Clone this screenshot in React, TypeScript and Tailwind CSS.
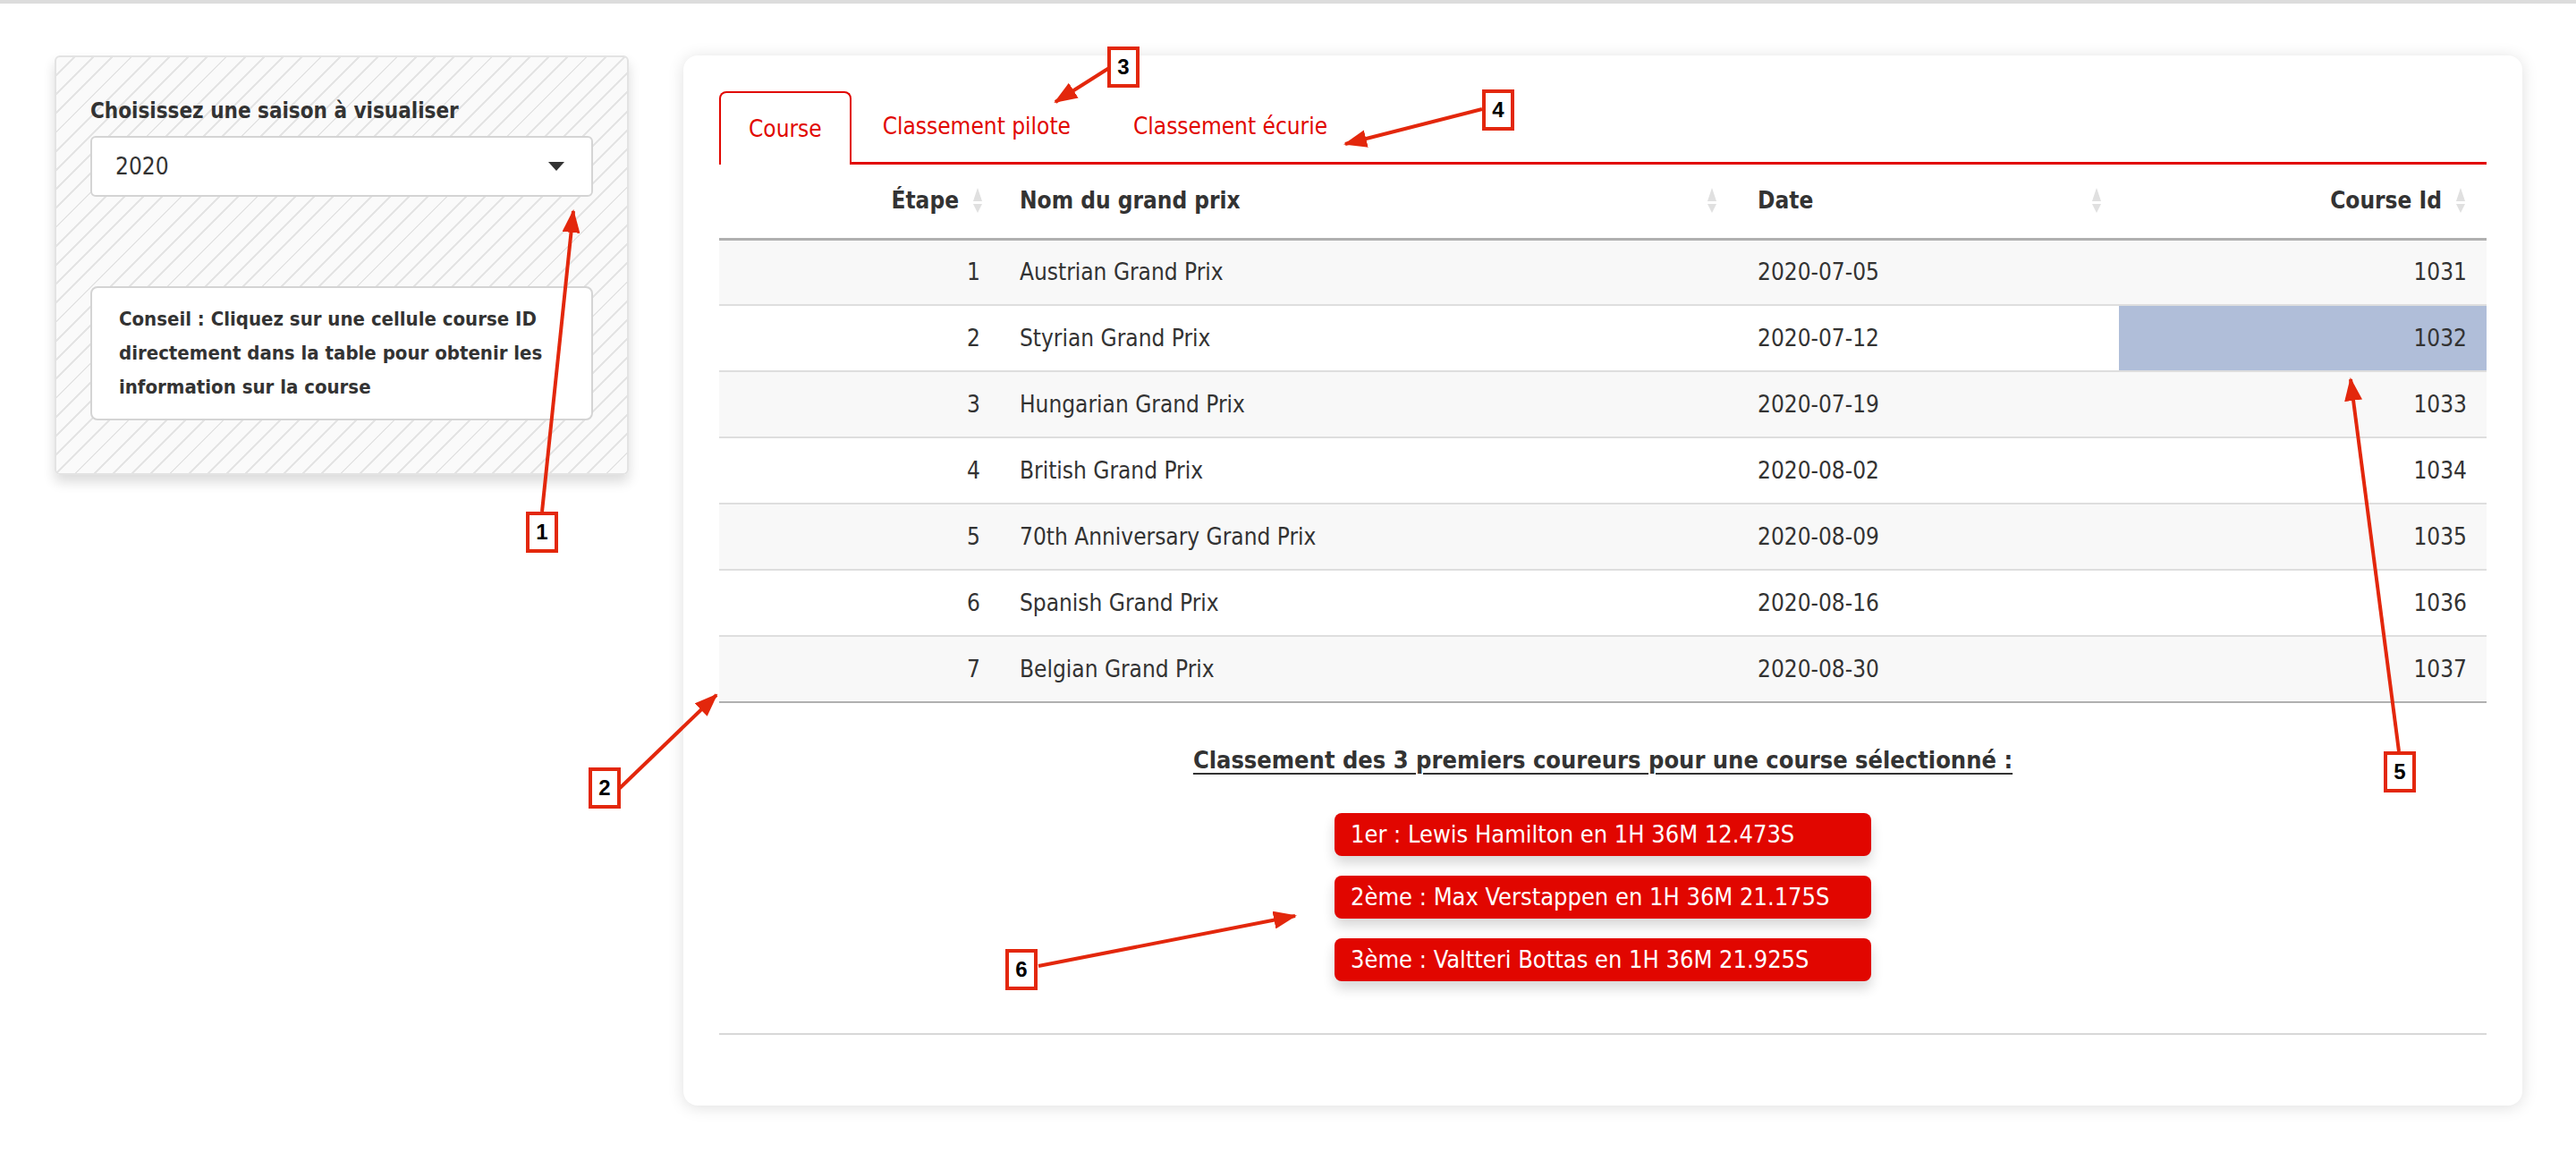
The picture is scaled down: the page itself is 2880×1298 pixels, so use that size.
import React from "react";

const FONT = "font-['Liberation_Sans_Narrow','DejaVu_Sans_Condensed',Roboto,sans-serif]";

const RACES = [
  { step: 1, name: "Austrian Grand Prix", date: "2020-07-05", id: 1031 },
  { step: 2, name: "Styrian Grand Prix", date: "2020-07-12", id: 1032 },
  { step: 3, name: "Hungarian Grand Prix", date: "2020-07-19", id: 1033 },
  { step: 4, name: "British Grand Prix", date: "2020-08-02", id: 1034 },
  { step: 5, name: "70th Anniversary Grand Prix", date: "2020-08-09", id: 1035 },
  { step: 6, name: "Spanish Grand Prix", date: "2020-08-16", id: 1036 },
  { step: 7, name: "Belgian Grand Prix", date: "2020-08-30", id: 1037 },
];

const PODIUM = [
  "1er : Lewis Hamilton en 1H 36M 12.473S",
  "2ème : Max Verstappen en 1H 36M 21.175S",
  "3ème : Valtteri Bottas en 1H 36M 21.925S",
];

// annotation boxes: [label, left, top]
const MARKS: [string, number, number][] = [
  ["1", 588, 568],
  ["2", 658, 854],
  ["3", 1238, 48],
  ["4", 1657, 96],
  ["5", 2665, 836],
  ["6", 1124, 1057],
];

// arrows: [x1, y1, x2, y2]
const ARROWS: [number, number, number, number][] = [
  [606, 568, 641, 232],
  [692, 878, 801, 773],
  [1240, 72, 1180, 110],
  [1657, 118, 1504, 157],
  [2682, 836, 2628, 420],
  [1161, 1076, 1448, 1020],
];

function SortIcon() {
  return (
    <svg width="14" height="32" viewBox="0 0 14 32" className="shrink-0">
      <path d="M7 1 L12 16 L2 16 Z" fill="#e0e0e0" />
      <path d="M2 19 L12 19 L7 29 Z" fill="#e0e0e0" />
    </svg>
  );
}

function Sidebar() {
  return (
    <div className="w-[642px] shrink-0 self-start rounded-md border-2 border-[#e3e3e3] bg-[repeating-linear-gradient(135deg,#fafafa_0px,#fafafa_13px,#e4e4e4_13px,#e4e4e4_15px)] px-[38px] pt-[40px] pb-[59px] shadow-[0_8px_14px_rgba(0,0,0,0.14)]">
      <label className="block text-[24px] font-bold text-[#333] leading-[40px]">
        Choisissez une saison à visualiser
      </label>
      <div className="mt-[8px] flex h-[68px] items-center justify-between rounded-md border-2 border-[#d4d4d4] bg-white pl-[26px] pr-[30px]">
        <span className="text-[26px] text-[#333]">2020</span>
        <svg width="18" height="10" viewBox="0 0 18 10">
          <path d="M0 0 H18 L9 10 Z" fill="#333" />
        </svg>
      </div>
      <div className="mt-[100px] rounded-lg border-2 border-[#d4d4d4] bg-white px-[30px] py-[16px]">
        <p className="text-[22px] font-bold leading-[38px] text-[#333]">
          Conseil : Cliquez sur une cellule course ID directement dans la table pour obtenir les information sur la course
        </p>
      </div>
    </div>
  );
}

function Tabs() {
  return (
    <div className="flex items-end border-b-[3px] border-[#e10600] text-[26px] text-[#e10600]">
      <div className="-mb-[3px] flex h-[82px] items-center rounded-t-lg border-2 border-b-0 border-[#e10600] bg-white px-[31px]">
        Course
      </div>
      <div className="flex h-[80px] items-center px-[35px]">Classement pilote</div>
      <div className="flex h-[80px] items-center px-[35px]">Classement écurie</div>
    </div>
  );
}

function RaceTable() {
  return (
    <table className="w-full table-fixed border-collapse text-[26px] text-[#333]">
      <colgroup>
        <col className="w-[310px]" />
        <col className="w-[825px]" />
        <col className="w-[430px]" />
        <col />
      </colgroup>
      <thead>
        <tr className="h-[83px] border-b-[3px] border-[#b0b0b0]">
          <th className="pr-[14px] font-bold">
            <div className="flex items-center justify-end gap-[14px]">
              <span>Étape</span>
              <SortIcon />
            </div>
          </th>
          <th className="pl-[26px] pr-[18px] font-bold">
            <div className="flex items-center justify-between">
              <span>Nom du grand prix</span>
              <SortIcon />
            </div>
          </th>
          <th className="pl-[26px] pr-[18px] font-bold">
            <div className="flex items-center justify-between">
              <span>Date</span>
              <SortIcon />
            </div>
          </th>
          <th className="pr-[22px] font-bold">
            <div className="flex items-center justify-end gap-[14px]">
              <span>Course Id</span>
              <SortIcon />
            </div>
          </th>
        </tr>
      </thead>
      <tbody>
        {RACES.map((r, i) => (
          <tr
            key={r.id}
            className={`h-[74px] border-b-2 ${i === 6 ? "border-[#b0b0b0]" : "border-[#dedede]"} ${i % 2 === 0 ? "bg-[#f8f8f8]" : "bg-white"}`}
          >
            <td className="pr-[18px] text-right">{r.step}</td>
            <td className="pl-[26px]">{r.name}</td>
            <td className="pl-[26px]">{r.date}</td>
            <td className={`pr-[22px] text-right ${r.id === 1032 ? "bg-[#b0bed9]" : ""}`}>{r.id}</td>
          </tr>
        ))}
      </tbody>
    </table>
  );
}

function Podium() {
  return (
    <div className="flex flex-col items-center pt-[44px]">
      <h4 className="text-[27px] font-bold leading-[40px] text-[#333] underline underline-offset-[5px] decoration-2">
        Classement des 3 premiers coureurs pour une course sélectionné :
      </h4>
      <div className="mt-[39px] flex flex-col gap-[22px]">
        {PODIUM.map((p) => (
          <div
            key={p}
            className="flex h-[48px] w-[600px] items-center rounded-lg bg-[#e10600] pl-[18px] text-[27px] text-white shadow-[0_8px_14px_rgba(0,0,0,0.16)]"
          >
            {p}
          </div>
        ))}
      </div>
      <div className="mt-[58px] h-[2px] w-full bg-[#d8d8d8]" />
    </div>
  );
}

export default function App() {
  return (
    <div className={`relative h-[1298px] w-[2880px] overflow-hidden border-t-4 border-[#dcdcdc] bg-white ${FONT}`}>
      <div className="flex items-start gap-[61px] pl-[61px] pr-[60px] pt-[58px]">
        <Sidebar />
        <div className="flex-1 rounded-2xl bg-white px-[40px] pt-[39px] pb-[79px] shadow-[0_2px_18px_rgba(0,0,0,0.13)]">
          <Tabs />
          <RaceTable />
          <Podium />
        </div>
      </div>

      <svg className="pointer-events-none absolute left-0 top-0" width="2880" height="1298">
        <defs>
          <marker id="head" markerWidth="26" markerHeight="20" refX="24" refY="10" orient="auto" markerUnits="userSpaceOnUse">
            <path d="M0 0 L26 10 L0 20 Z" fill="#e3270c" />
          </marker>
        </defs>
        {ARROWS.map(([x1, y1, x2, y2], i) => (
          <line key={i} x1={x1} y1={y1} x2={x2} y2={y2} stroke="#e3270c" strokeWidth="4" markerEnd="url(#head)" />
        ))}
      </svg>
      {MARKS.map(([t, x, y]) => (
        <div
          key={t}
          className="absolute flex h-[46px] w-[36px] items-center justify-center border-4 border-[#e3270c] bg-white font-['Liberation_Sans',Arial,sans-serif] text-[24px] font-bold text-black"
          style={{ left: x, top: y }}
        >
          {t}
        </div>
      ))}
    </div>
  );
}
